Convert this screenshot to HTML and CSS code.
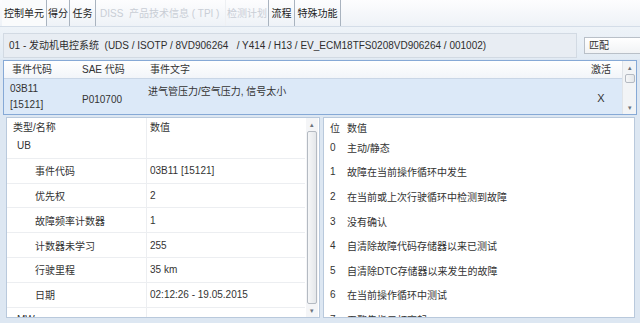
FILE: index.html
```html
<!DOCTYPE html>
<html>
<head>
    <meta charset="utf-8">
    <title>控制单元</title>
<link rel="stylesheet" href="styles.css">
</head>
<body>
<div class="app">
    <div class="tab-bar">
        <span class="tab active t-ecu">控制单元</span>
        <span class="tab t-score">得分</span>
        <span class="tab t-task">任务</span>
        <span class="tab disabled t-tpi">DISS&nbsp; 产品技术信息 ( TPI )</span>
        <span class="tab disabled t-plan">检测计划</span>
        <span class="tab t-flow">流程</span>
        <span class="tab t-special">特殊功能</span>
    </div>

    <div class="ecu-bar">
        <div class="ecu-field">01 - 发动机电控系统&nbsp; (UDS / ISOTP / 8VD906264 &nbsp; / Y414 / H13 / EV_ECM18TFS0208VD906264 / 001002)</div>
        <div class="combo">匹配</div>
    </div>

    <div class="event-table">
        <div class="ev-grid">
            <div class="ev-head">事件代码</div>
            <div class="ev-head">SAE 代码</div>
            <div class="ev-head">事件文字</div>
            <div class="ev-head center">激活</div>
            <div class="ev-cell code">03B11<br>[15121]</div>
            <div class="ev-cell sae">P010700</div>
            <div class="ev-cell text">进气管压力/空气压力, 信号太小</div>
            <div class="ev-cell center mark">X</div>
        </div>
        <div class="scrollbar">
            <span class="arrow">&#9652;</span>
            <span class="thumb small"></span>
            <span class="track"></span>
            <span class="arrow">&#9662;</span>
        </div>
    </div>

    <div class="panels">
        <div class="panel">
            <div class="panel-body">
                <div class="detail-row head">
                    <div class="name">类型/名称</div>
                    <div class="value">数值</div>
                </div>
                <div class="detail-row">
                    <div class="name lvl1">UB</div>
                    <div class="value"></div>
                </div>
                <div class="detail-row">
                    <div class="name lvl2">事件代码</div>
                    <div class="value">03B11 [15121]</div>
                </div>
                <div class="detail-row">
                    <div class="name lvl2">优先权</div>
                    <div class="value">2</div>
                </div>
                <div class="detail-row">
                    <div class="name lvl2">故障频率计数器</div>
                    <div class="value">1</div>
                </div>
                <div class="detail-row">
                    <div class="name lvl2">计数器未学习</div>
                    <div class="value">255</div>
                </div>
                <div class="detail-row">
                    <div class="name lvl2">行驶里程</div>
                    <div class="value">35 km</div>
                </div>
                <div class="detail-row">
                    <div class="name lvl2">日期</div>
                    <div class="value">02:12:26 - 19.05.2015</div>
                </div>
                <div class="detail-row">
                    <div class="name lvl1">MW</div>
                    <div class="value"></div>
                </div>
            </div>
            <div class="scrollbar tall">
                <span class="arrow">&#9652;</span>
                <span class="thumb"></span>
                <span class="arrow">&#9662;</span>
            </div>
        </div>

        <div class="panel right">
            <div class="panel-body">
                <div class="bit-row head"><span class="bit">位</span><span>数值</span></div>
                <div class="bit-row"><span class="bit">0</span><span>主动/静态</span></div>
                <div class="bit-row"><span class="bit">1</span><span>故障在当前操作循环中发生</span></div>
                <div class="bit-row"><span class="bit">2</span><span>在当前或上次行驶循环中检测到故障</span></div>
                <div class="bit-row"><span class="bit">3</span><span>没有确认</span></div>
                <div class="bit-row"><span class="bit">4</span><span>自清除故障代码存储器以来已测试</span></div>
                <div class="bit-row"><span class="bit">5</span><span>自清除DTC存储器以来发生的故障</span></div>
                <div class="bit-row"><span class="bit">6</span><span>在当前操作循环中测试</span></div>
                <div class="bit-row"><span class="bit">7</span><span>无警告指示灯亮起</span></div>
            </div>
        </div>
    </div>
</div>
</body>
</html>
```

FILE: styles.css
```css
* {
    margin: 0;
    padding: 0;
    box-sizing: border-box;
}
body {
    width: 640px;
    height: 323px;
    overflow: hidden;
    background: #dde7f2;
    font-family: "Liberation Sans", "Noto Sans CJK SC", sans-serif;
    font-size: 10px;
    color: #333;
}
.app {
    display: flex;
    flex-direction: column;
    height: 323px;
}
/* 选项卡 */
.tab-bar {
    height: 27px;
    display: flex;
    align-items: stretch;
    padding-left: 2px;
    background: linear-gradient(#fdfdfe, #eef2f7);
    border-bottom: 1px solid #d4dde8;
}
.tab {
    display: flex;
    align-items: center;
    justify-content: center;
    padding-bottom: 2px;
    border-right: 1px solid #a9b3bf;
    color: #222;
    white-space: nowrap;
}
.tab.active {
    background: #fafbfc;
}
.t-ecu { width: 45px; }
.t-score { width: 23px; }
.t-task { width: 26px; }
.t-tpi { width: 130px; justify-content: flex-start; padding-left: 4px; }
.t-plan { width: 43px; }
.t-flow { width: 26px; }
.t-special { width: 46px; }
.tab.disabled {
    color: #c9ced6;
}
.tab.t-tpi {
    border-right-color: #eef0f3;
}
/* 控制单元行 */
.ecu-bar {
    height: 32px;
    display: flex;
    align-items: center;
    padding: 4px 0 0 3px;
    background: linear-gradient(#eef3f8, #e2ebf4);
}
.ecu-field {
    width: 574px;
    height: 25px;
    line-height: 24px;
    padding-left: 5px;
    background: #e8edf3;
    border: 1px solid #d2dae3;
    color: #2e2e2e;
    white-space: nowrap;
    overflow: hidden;
}
.combo {
    margin-left: 7px;
    flex: 1;
    height: 17px;
    line-height: 15px;
    padding-left: 4px;
    background: linear-gradient(#ffffff, #f1f3f5);
    border: 1px solid #b9c0c8;
    border-right: none;
}
/* 事件表 */
.event-table {
    margin: 1px 3px 0 3px;
    height: 55px;
    display: flex;
    border: 1px solid #86a9d6;
    background: #dce9f8;
}
.ev-grid {
    flex: 1;
    display: grid;
    grid-template-columns: 70px 68px 1fr 42px;
    grid-template-rows: 18px 1fr;
}
.ev-head {
    padding-left: 8px;
    line-height: 18px;
    background: linear-gradient(#ffffff, #f2f5f9);
    border-bottom: 1px solid #c9d6e6;
}
.ev-cell {
    padding-left: 8px;
    display: flex;
    align-items: center;
}
.ev-cell.code {
    padding-left: 6px;
    line-height: 16px;
    padding-top: 1px;
}
.ev-cell.sae {
    padding-top: 6px;
}
.ev-cell.text {
    align-items: flex-start;
    padding-top: 4px;
    padding-left: 6px;
}
.center {
    padding-left: 0;
    text-align: center;
    justify-content: center;
}
.ev-cell.mark {
    font-size: 11px;
    padding-top: 3px;
}
/* 滚动条 */
.scrollbar {
    width: 14px;
    display: flex;
    flex-direction: column;
    align-items: center;
    background: #f2f4f6;
    border-left: 1px solid #e0e4e8;
}
.scrollbar .arrow {
    height: 13px;
    font-size: 7px;
    line-height: 13px;
    color: #6c737c;
}
.scrollbar .thumb {
    width: 10px;
    flex: 1;
    background: linear-gradient(90deg, #f6f7f8, #e4e7ea);
    border: 1px solid #b4bac2;
    border-radius: 2px;
}
.scrollbar .thumb.small {
    flex: 0 0 9px;
}
.scrollbar .track {
    flex: 1;
}
/* 下方两个面板 */
.panels {
    margin-top: 2px;
    height: 201px;
    display: flex;
    gap: 3px;
    padding: 0 5px 0 6px;
}
.panel {
    width: 314px;
    display: flex;
    background: #fff;
    border: 1px solid #b9c9dc;
    overflow: hidden;
}
.panel.right {
    flex: 1;
    width: auto;
}
.panel-body {
    flex: 1;
    overflow: hidden;
}
.scrollbar.tall {
    width: 12px;
    margin: 0 1px;
    border-left: none;
    background: #f4f5f7;
}
.scrollbar.tall .thumb {
    width: 10px;
}
.detail-row {
    display: grid;
    grid-template-columns: 140px 1fr;
    height: 24.8px;
    border-bottom: 1px solid #eceef1;
}
.detail-row.head {
    height: 16px;
    border-bottom: none;
}
.detail-row .name {
    padding-left: 6px;
    display: flex;
    align-items: center;
    border-right: 1px solid #eceef1;
}
.detail-row .value {
    padding-left: 3px;
    display: flex;
    align-items: center;
}
.detail-row.head .name,
.detail-row.head .value {
    align-items: flex-start;
    padding-top: 1px;
}
.detail-row .lvl1 {
    padding-left: 10px;
}
.detail-row .lvl2 {
    padding-left: 28px;
}
.bit-row {
    display: flex;
    align-items: center;
    height: 24.6px;
}
.bit-row.head {
    height: 17px;
    align-items: flex-start;
    padding-top: 2px;
}
.bit-row .bit {
    width: 23px;
    padding-left: 6px;
}
```
